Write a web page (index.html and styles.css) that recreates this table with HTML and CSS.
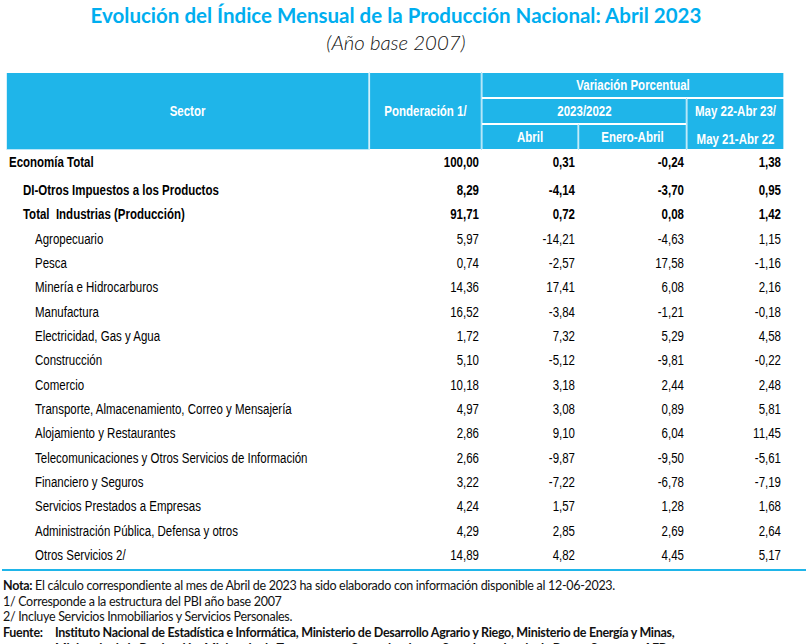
FILE: index.html
```html
<!DOCTYPE html>
<html lang="es">
<head>
<meta charset="utf-8">
<title>Evolución del Índice Mensual de la Producción Nacional</title>
<link rel="stylesheet" href="styles.css">
</head>
<body>
<div class="page">
  <h1 class="title">Evolución del Índice Mensual de la Producción Nacional: Abril 2023</h1>
  <p class="subtitle">(Año base 2007)</p>
  <div class="table-wrap">
  <table class="data">
    <colgroup>
      <col class="c-sector">
      <col class="c-pond">
      <col class="c-abril">
      <col class="c-enero">
      <col class="c-may">
    </colgroup>
    <thead>
      <tr>
        <th rowspan="3">Sector</th>
        <th rowspan="3">Ponderación 1/</th>
        <th colspan="3">Variación Porcentual</th>
      </tr>
      <tr>
        <th colspan="2">2023/2022</th>
        <th rowspan="2" class="h-may"><div class="may-wrap"><div>May 22-Abr 23/</div><div class="may-l2">May 21-Abr 22</div></div></th>
      </tr>
      <tr>
        <th>Abril</th>
        <th>Enero-Abril</th>
      </tr>
    </thead>
    <tbody>
      <tr class="bold first"><td class="lv0">Economía Total</td><td>100,00</td><td>0,31</td><td>-0,24</td><td>1,38</td></tr>
      <tr class="bold"><td class="lv1">DI-Otros Impuestos a los Productos</td><td>8,29</td><td>-4,14</td><td>-3,70</td><td>0,95</td></tr>
      <tr class="bold"><td class="lv1">Total&nbsp; Industrias (Producción)</td><td>91,71</td><td>0,72</td><td>0,08</td><td>1,42</td></tr>
      <tr><td class="lv2">Agropecuario</td><td>5,97</td><td>-14,21</td><td>-4,63</td><td>1,15</td></tr>
      <tr><td class="lv2">Pesca</td><td>0,74</td><td>-2,57</td><td>17,58</td><td>-1,16</td></tr>
      <tr><td class="lv2">Minería e Hidrocarburos</td><td>14,36</td><td>17,41</td><td>6,08</td><td>2,16</td></tr>
      <tr><td class="lv2">Manufactura</td><td>16,52</td><td>-3,84</td><td>-1,21</td><td>-0,18</td></tr>
      <tr><td class="lv2">Electricidad, Gas y Agua</td><td>1,72</td><td>7,32</td><td>5,29</td><td>4,58</td></tr>
      <tr><td class="lv2">Construcción</td><td>5,10</td><td>-5,12</td><td>-9,81</td><td>-0,22</td></tr>
      <tr><td class="lv2">Comercio</td><td>10,18</td><td>3,18</td><td>2,44</td><td>2,48</td></tr>
      <tr><td class="lv2">Transporte, Almacenamiento, Correo y Mensajería</td><td>4,97</td><td>3,08</td><td>0,89</td><td>5,81</td></tr>
      <tr><td class="lv2">Alojamiento y Restaurantes</td><td>2,86</td><td>9,10</td><td>6,04</td><td>11,45</td></tr>
      <tr><td class="lv2">Telecomunicaciones y Otros Servicios de Información</td><td>2,66</td><td>-9,87</td><td>-9,50</td><td>-5,61</td></tr>
      <tr><td class="lv2">Financiero y Seguros</td><td>3,22</td><td>-7,22</td><td>-6,78</td><td>-7,19</td></tr>
      <tr><td class="lv2">Servicios Prestados a Empresas</td><td>4,24</td><td>1,57</td><td>1,28</td><td>1,68</td></tr>
      <tr><td class="lv2">Administración Pública, Defensa y otros</td><td>4,29</td><td>2,85</td><td>2,69</td><td>2,64</td></tr>
      <tr><td class="lv2">Otros Servicios 2/</td><td>14,89</td><td>4,82</td><td>4,45</td><td>5,17</td></tr>
    </tbody>
  </table>
  </div>
  <div class="rule"></div>
  <div class="notes">
    <p><b>Nota:</b> El cálculo correspondiente al mes de Abril de 2023 ha sido elaborado con información disponible al 12-06-2023.</p>
    <p>1/ Corresponde a la estructura del PBI año base 2007</p>
    <p>2/ Incluye Servicios Inmobiliarios y Servicios Personales.</p>
    <div class="source">
      <b class="src-label">Fuente:</b>
      <b class="src-text">Instituto Nacional de Estadística e Informática, Ministerio de Desarrollo Agrario y Riego, Ministerio de Energía y Minas, Ministerio de la Producción, Ministerio de Transportes y Comunicaciones, Superintendencia de Banca, Seguros y AFP.</b>
    </div>
  </div>
</div>
</body>
</html>
```

FILE: styles.css
```css
html, body {
  margin: 0;
  padding: 0;
  background: #ffffff;
}

.page {
  width: 808px;
  overflow: hidden;
}

.title {
  margin: 3px 0 0 0;
  padding-right: 16px;
  font-family: Lato, "Open Sans", sans-serif;
  font-weight: 700;
  font-size: 20.5px;
  line-height: 24px;
  color: #00aeef;
  text-align: center;
}

.subtitle {
  margin: 3px 0 0 0;
  padding-right: 16px;
  font-family: Lato, "Open Sans", sans-serif;
  font-style: italic;
  font-weight: 300;
  font-size: 20.4px;
  line-height: 24px;
  color: #111111;
  text-align: center;
}

/* Arial Narrow look: Liberation Sans (Arial metrics) compressed horizontally */
.table-wrap {
  margin: 18px 0 0 6px;
  width: 778px;
  height: 497px;
  overflow: hidden;
}

.data {
  transform: scaleX(0.82);
  transform-origin: 0 0;
  border-collapse: separate;
  border-spacing: 0;
  table-layout: fixed;
  width: 948.8px;
  font-family: "Liberation Sans", Arial, sans-serif;
  font-size: 14px;
  color: #000;
}

.c-sector { width: 442.7px; }
.c-pond { width: 137.8px; }
.c-abril { width: 117.1px; }
.c-enero { width: 132.9px; }
.c-may { width: 118.3px; }

.data th {
  background: #1fb5e9;
  color: #ffffff;
  font-weight: 700;
  border: 1px solid #ffffff;
  padding: 0;
  line-height: 24px;
  height: 24px;
  text-align: center;
  vertical-align: middle;
  white-space: nowrap;
}

.data thead tr:first-child th:first-child {
  border-bottom-color: #b9e6f8;
}

.data th.h-may {
  vertical-align: top;
}

.may-wrap {
  line-height: 24px;
}

.may-l2 {
  margin-top: 4px;
  margin-bottom: -4px;
}

.data td {
  padding: 0 3.7px 0 0;
  line-height: 24.35px;
  text-align: right;
  white-space: nowrap;
}

.data td.lv0 { text-align: left; padding-left: 3.7px; }
.data td.lv1 { text-align: left; padding-left: 20.7px; }
.data td.lv2 { text-align: left; padding-left: 35.4px; }

.data tr.bold td { font-weight: 700; }
.data tr.first td { padding-bottom: 4px; line-height: 24px; }

.rule {
  height: 2px;
  margin: 0 2px 0 2px;
  background: #1fb5e9;
}

.notes {
  margin-top: 7px;
  padding-left: 3px;
  font-family: Lato, "Open Sans", sans-serif;
  font-size: 12.5px;
  letter-spacing: -0.3px;
  line-height: 15.7px;
  color: #111111;
}

.notes p {
  margin: 0;
  white-space: nowrap;
}

.source {
  display: grid;
  grid-template-columns: 52px 650px;
}
```
